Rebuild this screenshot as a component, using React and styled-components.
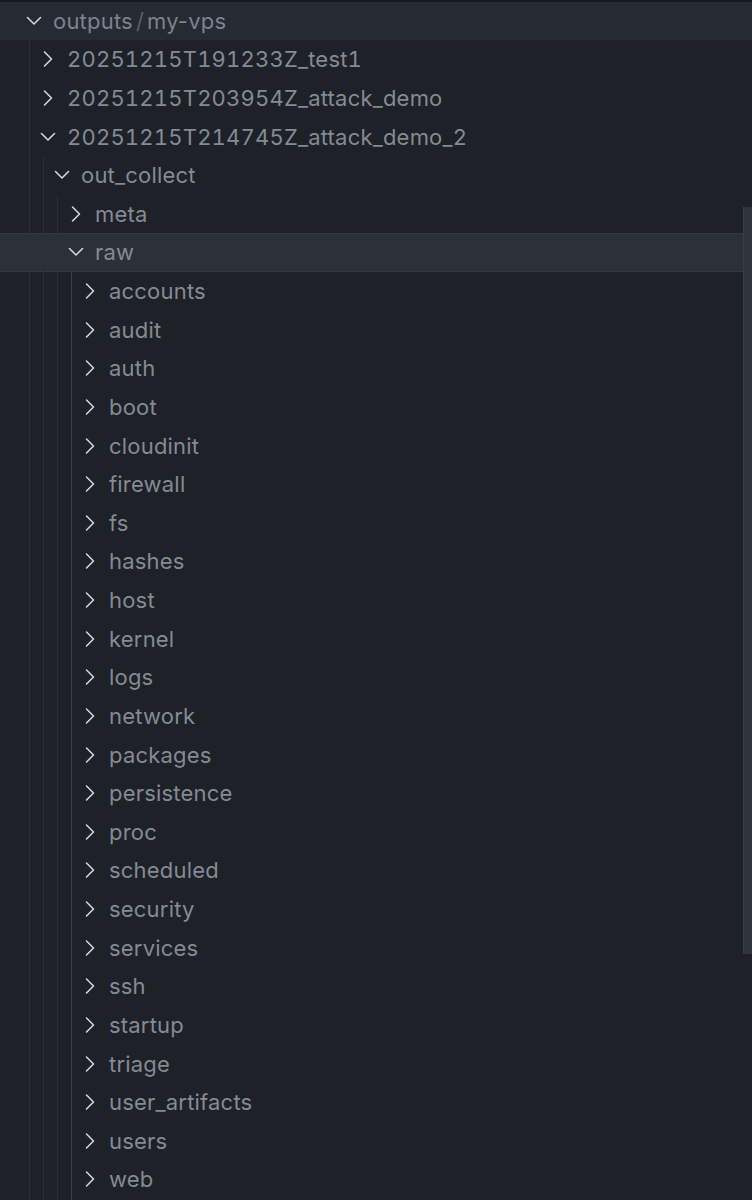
import React from 'react'
import styled, { createGlobalStyle } from 'styled-components'

const Global = createGlobalStyle`
  html, body {
    margin: 0;
    padding: 0;
    background: #1e2127;
  }
  body {
    font-family: Inter, "Noto Sans", sans-serif;
  }
`

const ROW = 38.63
const STEP = 14

const Panel = styled.div`
  position: relative;
  width: 752px;
  height: 1200px;
  overflow: hidden;
  background: #1e2127;
`

const Header = styled.div`
  display: flex;
  align-items: center;
  height: 40px;
  box-sizing: border-box;
  border-top: 2px solid #17191d;
  background: #262a33;
  color: #7d828c;
  font-size: 22px;
  letter-spacing: 0.2px;
  padding-left: 22px;
`

const Slash = styled.span`
  color: #5a5f68;
  margin: 0 3px;
`

const Tree = styled.div`
  position: relative;
`

const Row = styled.div`
  position: relative;
  display: flex;
  align-items: center;
  height: ${ROW}px;
  box-sizing: border-box;
  padding-left: ${p => 22 + p.$depth * STEP}px;
  color: #858a94;
  font-size: 22px;
  letter-spacing: 0.2px;
  font-variant-numeric: tabular-nums;
  white-space: nowrap;
  background: ${p => (p.$selected ? '#2c3039' : 'transparent')};
  border-top: 1px solid ${p => (p.$selected ? '#343842' : 'transparent')};
  border-bottom: 1px solid ${p => (p.$selected ? '#343842' : 'transparent')};
`

const Chevron = styled.span`
  display: flex;
  align-items: center;
  justify-content: center;
  width: 24px;
  height: 24px;
  margin-right: 7px;
  color: #d2d5da;
  flex: none;
`

const Guide = styled.div`
  position: absolute;
  width: 1px;
  left: ${p => p.$x}px;
  top: ${p => p.$top}px;
  height: ${p => p.$h}px;
  background: ${p => (p.$active ? '#3b3f48' : '#2a2e35')};
  z-index: 1;
`

const Scrollbar = styled.div`
  position: absolute;
  right: 0;
  top: 207px;
  width: 9px;
  height: 747px;
  box-sizing: border-box;
  background: #30343d;
  border-left: 1px solid #3a3e47;
  z-index: 2;
`

const Icon = ({ open }) => (
  <svg width="24" height="24" viewBox="0 0 24 24" fill="none" stroke="currentColor" strokeWidth="1.6" strokeLinecap="round" strokeLinejoin="round">
    {open ? <path d="M5.5 8.5l6.5 6.5 6.5-6.5" /> : <path d="M8.5 5l7 7-7 7" />}
  </svg>
)

const rawChildren = [
  'accounts', 'audit', 'auth', 'boot', 'cloudinit', 'firewall', 'fs', 'hashes',
  'host', 'kernel', 'logs', 'network', 'packages', 'persistence', 'proc',
  'scheduled', 'security', 'services', 'ssh', 'startup', 'triage',
  'user_artifacts', 'users', 'web',
]

const rows = [
  { name: '20251215T191233Z_test1', depth: 1 },
  { name: '20251215T203954Z_attack_demo', depth: 1 },
  { name: '20251215T214745Z_attack_demo_2', depth: 1, open: true },
  { name: 'out_collect', depth: 2, open: true },
  { name: 'meta', depth: 3 },
  { name: 'raw', depth: 3, open: true, selected: true },
  ...rawChildren.map(name => ({ name, depth: 4 })),
]

export default function App() {
  return (
    <Panel>
      <Global />
      <Header>
        <Chevron><Icon open /></Chevron>
        <span>outputs</span>
        <Slash>/</Slash>
        <span>my-vps</span>
      </Header>
      <Tree>
        <Guide $x={29} $top={0} $h={1200} />
        <Guide $x={43} $top={ROW * 3} $h={1200} />
        <Guide $x={57} $top={ROW * 4} $h={1200} />
        <Guide $x={71} $top={ROW * 6} $h={1200} $active />
        {rows.map(r => (
          <Row key={r.name} $depth={r.depth} $selected={r.selected}>
            <Chevron><Icon open={r.open} /></Chevron>
            <span>{r.name}</span>
          </Row>
        ))}
      </Tree>
      <Scrollbar />
    </Panel>
  )
}
